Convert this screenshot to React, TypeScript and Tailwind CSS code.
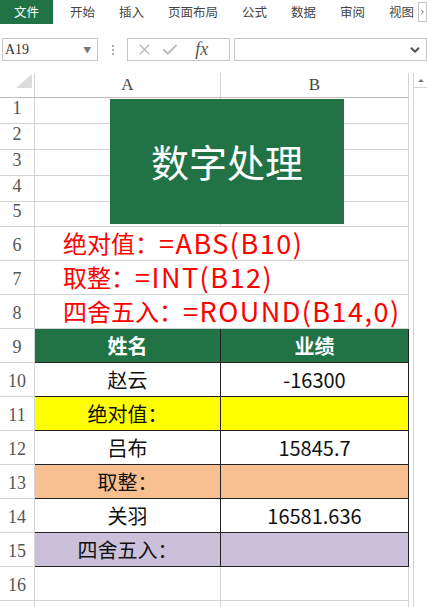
import { X, Check, ChevronDown, ChevronRight } from "lucide-react"

const cjk = { fontFamily: '"Noto Sans CJK SC", "Noto Sans", sans-serif' }
const serif = { fontFamily: '"Liberation Serif", "Noto Sans CJK SC", serif' }

const tabs = ["开始", "插入", "页面布局", "公式", "数据", "审阅", "视图"]

const RowNum = ({ n, h }: { n?: number; h: string }) => (
    <div
        className={`w-[35px] shrink-0 ${h} flex items-end justify-center pb-[1px] text-[18px] text-[#555] border-r border-b border-[#d4d4d4]`}
        style={serif}
    >
        {n}
    </div>
)

const App = () => {
    const top = [
        { n: 1, h: "h-[26px]" },
        { n: 2, h: "h-[26px]" },
        { n: 3, h: "h-[26px]" },
        { n: 4, h: "h-[26px]" },
        { n: 5, h: "h-[25px]" },
    ]
    const formulas = [
        { label: "绝对值：", f: "=ABS(B10)" },
        { label: "取整：", f: "=INT(B12)" },
        { label: "四舍五入：", f: "=ROUND(B14,0)" },
    ]
    const data = [
        { n: 10, a: "赵云", b: "-16300", bg: "bg-white" },
        { n: 11, a: "绝对值：", b: "", bg: "bg-[#ffff00]" },
        { n: 12, a: "吕布", b: "15845.7", bg: "bg-white" },
        { n: 13, a: "取整：", b: "", bg: "bg-[#f8bf90]" },
        { n: 14, a: "关羽", b: "16581.636", bg: "bg-white" },
        { n: 15, a: "四舍五入：", b: "", bg: "bg-[#cbc0da]" },
    ]

    return (
        <div className="w-[427px] h-[607px] overflow-hidden bg-white" style={cjk}>
            {/* ribbon tabs */}
            <div className="h-[24px] flex items-center text-[12.5px] text-[#444]">
                <div className="w-[53px] h-full shrink-0 bg-[#217346] text-white flex items-center justify-center">文件</div>
                <div className="flex flex-1 pl-[17px] gap-[24px] whitespace-nowrap">
                    {tabs.map((t) => (
                        <span key={t} className="shrink-0">{t}</span>
                    ))}
                </div>
                <div className="w-[9px] h-[20px] shrink-0 border border-[#c6c6c6] flex items-center justify-center text-[#555]">
                    <ChevronRight size={8} strokeWidth={3} />
                </div>
            </div>

            {/* formula bar */}
            <div className="h-[49px] flex items-center pt-[2px]">
                <div className="ml-[2px] w-[97px] h-[23px] border border-[#c6c6c6] flex items-center justify-between pl-[2px] pr-[6px]">
                    <span className="text-[14px] text-[#333]" style={serif}>A19</span>
                    <span className="text-[#777] text-[8px]">▼</span>
                </div>
                <div className="w-[29px] flex flex-col items-center gap-[2px]">
                    <span className="w-[2px] h-[2px] bg-[#aaa]" />
                    <span className="w-[2px] h-[2px] bg-[#aaa]" />
                    <span className="w-[2px] h-[2px] bg-[#aaa]" />
                </div>
                <div className="w-[104px] h-[23px] border border-[#c6c6c6] flex items-center pl-[8px] gap-[8px] text-[#bbb]">
                    <X size={17} strokeWidth={2} />
                    <Check size={18} strokeWidth={2.5} />
                    <span className="ml-[8px] italic text-[18px] text-[#555]" style={serif}>fx</span>
                </div>
                <div className="ml-[4px] w-[194px] h-[23px] border border-[#c6c6c6] flex items-center justify-end pr-[4px] text-[#555]">
                    <ChevronDown size={14} strokeWidth={3.5} />
                </div>
            </div>

            {/* sheet */}
            <div className="flex">
                <div className="w-[409px] relative">
                    {/* column headers */}
                    <div className="flex h-[25px] border-b border-[#bbb]">
                        <div className="w-[35px] shrink-0 border-r border-[#d4d4d4] flex items-end justify-end pr-[2px] pb-[9px]">
                            <div className="w-0 h-0 border-l-[16px] border-l-transparent border-b-[14px] border-b-[#dcdcdc]" />
                        </div>
                        <div className="w-[186px] border-r border-[#d4d4d4] flex items-center justify-center text-[17px] text-[#444]" style={serif}>A</div>
                        <div className="w-[188px] border-r border-[#d4d4d4] flex items-center justify-center text-[17px] text-[#444]" style={serif}>B</div>
                    </div>

                    {/* rows 1-5 */}
                    {top.map((r) => (
                        <div key={r.n} className="flex">
                            <RowNum n={r.n} h={r.h} />
                            <div className={`w-[186px] ${r.h} border-r border-b border-[#d4d4d4]`} />
                            <div className={`w-[188px] ${r.h} border-r border-b border-[#d4d4d4]`} />
                        </div>
                    ))}

                    {/* title shape */}
                    <div className="absolute left-[110px] top-[26px] w-[234px] h-[125px] bg-[#217346] flex items-center justify-center text-white text-[38px] pb-[2px]">
                        数字处理
                    </div>

                    {/* rows 6-8: formulas, text overflows across A and B */}
                    {formulas.map((r, i) => (
                        <div key={r.f} className="flex">
                            <RowNum n={6 + i} h="h-[34px]" />
                            <div className="w-[374px] h-[34px] border-r border-b border-[#d4d4d4] flex items-center pl-[28px] pb-[2px] text-[#ff0000] whitespace-nowrap leading-none">
                                <span className="text-[24px] leading-none">{r.label}</span>
                                <span className="text-[27px] leading-none tracking-[1.5px]">{r.f}</span>
                            </div>
                        </div>
                    ))}

                    {/* row 9 header */}
                    <div className="flex">
                        <RowNum n={9} h="h-[34px]" />
                        <div className="w-[186px] h-[34px] bg-[#217346] border-r border-b border-[#222] flex items-center justify-center text-white font-bold text-[20px]">姓名</div>
                        <div className="w-[188px] h-[34px] bg-[#217346] border-r border-b border-[#222] flex items-center justify-center text-white font-bold text-[20px]">业绩</div>
                    </div>

                    {/* data rows */}
                    {data.map((r) => (
                        <div key={r.n} className="flex">
                            <RowNum n={r.n} h="h-[34px]" />
                            <div className={`w-[186px] h-[34px] ${r.bg} border-r border-b border-[#222] flex items-center justify-center text-[20px] text-[#111]`}>{r.a}</div>
                            <div className={`w-[188px] h-[34px] ${r.bg} border-r border-b border-[#222] flex items-center justify-center text-[20px] text-[#111]`}>{r.b}</div>
                        </div>
                    ))}

                    {/* row 16 + start of next */}
                    <div className="flex">
                        <RowNum n={16} h="h-[34px]" />
                        <div className="w-[186px] h-[34px] border-r border-b border-[#d4d4d4]" />
                        <div className="w-[188px] h-[34px] border-r border-b border-[#d4d4d4]" />
                    </div>
                    <div className="flex">
                        <RowNum h="h-[34px]" />
                        <div className="w-[186px] h-[34px] border-r border-[#d4d4d4]" />
                        <div className="w-[188px] h-[34px] border-r border-[#d4d4d4]" />
                    </div>
                </div>

                {/* vertical scrollbar */}
                <div className="ml-[4px] w-[14px] border-l border-[#d4d4d4] h-[540px]">
                    <div className="h-[15px] border-b border-[#d4d4d4] flex items-center justify-center">
                        <div className="w-0 h-0 border-l-[3px] border-r-[3px] border-b-[3px] border-l-transparent border-r-transparent border-b-[#777]" />
                    </div>
                </div>
            </div>
        </div>
    )
}

export default App
